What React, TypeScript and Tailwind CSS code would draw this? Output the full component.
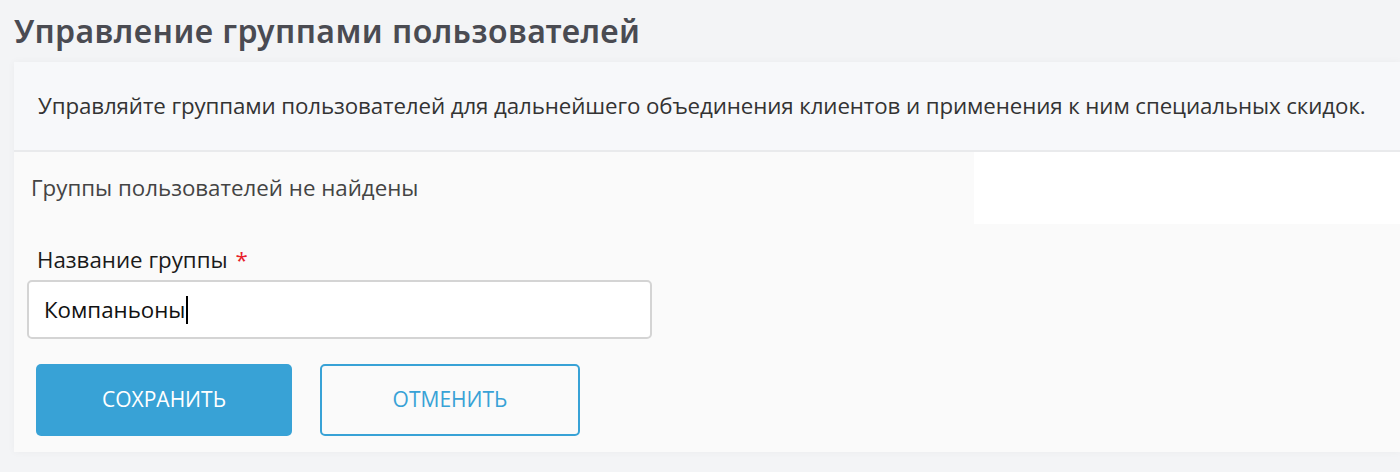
export default function App() {
  return (
    <div className="min-h-[472px] bg-[#f3f4f6] pl-[14px] pt-[12px] pb-[20px] font-['Open_Sans',sans-serif]">
      <h1 className="text-[32px] leading-[38px] font-semibold text-[#4a4b52] font-['Noto_Sans',sans-serif] tracking-[0.45px]">
        Управление группами пользователей
      </h1>
      <div className="mt-[12px] bg-[#fafafa] shadow-[0_0_8px_rgba(0,0,0,0.04)]">
        {/* header */}
        <div className="h-[90px] bg-[#f7f8fa] border-b-2 border-[#e9eaec] flex items-center pl-[24px]">
          <p className="text-[22.3px] leading-[30px] text-[#333] tracking-[-0.1px] whitespace-nowrap">
            Управляйте группами пользователей для дальнейшего объединения клиентов и применения к ним специальных скидок.
          </p>
        </div>
        {/* empty list */}
        <div className="flex h-[72px]">
          <div className="w-[960px] bg-[#fafafa] flex items-center pl-[17px] text-[22.3px] text-[#444]">
            Группы пользователей не найдены
          </div>
          <div className="flex-1 bg-white" />
        </div>
        {/* form */}
        <div className="pl-[13px] pt-[22px] pb-[16px]">
          <label className="block pl-[10px] text-[22.3px] text-[#1a1a1a] leading-[28px]">
            Название группы <span className="text-[#e8202a] ml-[2px]">*</span>
          </label>
          <div className="mt-[6px] w-[625px] h-[59px] bg-white border-2 border-[#d4d4d4] rounded-[5px] flex items-center pl-[15px] text-[22.3px] text-[#111]">
            Компаньоны<span className="inline-block w-[2px] h-[28px] bg-black" />
          </div>
          <div className="flex gap-[28px] mt-[25px] pl-[9px]">
            <button className="w-[256px] h-[72px] rounded-[5px] bg-[#38a2d6] text-white text-[21px] uppercase">
              Сохранить
            </button>
            <button className="w-[260px] h-[72px] rounded-[5px] border-2 border-[#38a2d6] text-[#38a2d6] text-[21px] uppercase">
              Отменить
            </button>
          </div>
        </div>
      </div>
    </div>
  );
}
